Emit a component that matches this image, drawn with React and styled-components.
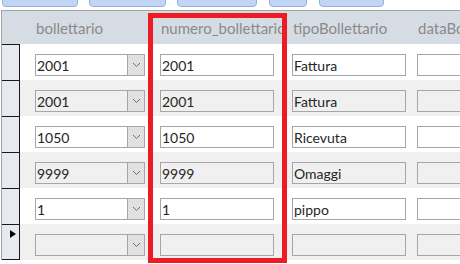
import styled, { createGlobalStyle } from "styled-components";

const GlobalStyle = createGlobalStyle`
  body {
    margin: 0;
    background: #ffffff;
    font-family: Lato, "Liberation Sans", sans-serif;
  }
`;

const TABS = [
  { w: 76, gap: 2 },
  { w: 77, gap: 11 },
  { w: 80, gap: 11 },
  { w: 38, gap: 12 },
  { w: 65, gap: 12 },
];

const COLUMNS = [
  { key: "bollettario", label: "bollettario", w: 125, iw: 110, combo: true },
  { key: "numero", label: "numero_bollettario", w: 132, iw: 114 },
  { key: "tipo", label: "tipoBollettario", w: 125, iw: 114 },
  { key: "data", label: "dataBollettario", w: 120, iw: 114 },
];

const ROWS = [
  { bollettario: "2001", numero: "2001", tipo: "Fattura", data: "" },
  { bollettario: "2001", numero: "2001", tipo: "Fattura", data: "" },
  { bollettario: "1050", numero: "1050", tipo: "Ricevuta", data: "" },
  { bollettario: "9999", numero: "9999", tipo: "Omaggi", data: "" },
  { bollettario: "1", numero: "1", tipo: "pippo", data: "" },
  { bollettario: "", numero: "", tipo: "", data: "", isNew: true },
];

function App() {
  return (
    <Page>
      <GlobalStyle />
      <TabStrip>
        {TABS.map((t, i) => (
          <Tab key={i} $w={t.w} $gap={t.gap} />
        ))}
      </TabStrip>
      <Datasheet>
        <HeaderRow>
          <HeaderSelector />
          <Cells>
            {COLUMNS.map((c) => (
              <HeaderCell key={c.key} $w={c.w}>
                {c.label}
              </HeaderCell>
            ))}
          </Cells>
        </HeaderRow>
        {ROWS.map((r, i) => (
          <Row key={i} $alt={i % 2 === 1}>
            <RowSelector>{r.isNew && <Pointer />}</RowSelector>
            <Cells>
              {COLUMNS.map((c) => (
                <Cell key={c.key} $w={c.w}>
                  <Field $w={c.iw}>
                    <FieldText>{r[c.key]}</FieldText>
                    {c.combo && (
                      <DropButton>
                        <svg width="9" height="6" viewBox="0 0 9 6">
                          <polyline
                            points="1,1 4.5,4.5 8,1"
                            fill="none"
                            stroke="#6d6d6d"
                            strokeWidth="1"
                          />
                        </svg>
                      </DropButton>
                    )}
                  </Field>
                </Cell>
              ))}
            </Cells>
          </Row>
        ))}
      </Datasheet>
      <Highlight />
    </Page>
  );
}

const Page = styled.div`
  position: relative;
  width: 460px;
  height: 264px;
  overflow: hidden;
  background: #ffffff;
`;

const TabStrip = styled.div`
  display: flex;
  height: 7px;
  align-items: flex-end;
`;

const Tab = styled.div`
  flex: none;
  width: ${(p) => p.$w}px;
  margin-left: ${(p) => p.$gap}px;
  height: 10px;
  box-sizing: border-box;
  background: #c3d5f4;
  border: 1px solid #93b1e0;
  border-radius: 0 0 4px 4px;
`;

const Datasheet = styled.div`
  margin-top: 3px;
  margin-left: 1px;
  border-top: 1px solid #a3a3a3;
  border-left: 1px solid #a3a3a3;
`;

const HeaderRow = styled.div`
  display: flex;
  height: 33px;
  background: #d6dce4;
`;

const HeaderSelector = styled.div`
  flex: none;
  width: 18px;
`;

const Cells = styled.div`
  display: flex;
  padding-left: 15px;
  flex: none;
`;

const HeaderCell = styled.div`
  flex: none;
  width: ${(p) => p.$w}px;
  display: flex;
  align-items: center;
  padding-left: 1px;
  box-sizing: border-box;
  color: #8a8a8a;
  font-size: 15px;
  white-space: nowrap;
  overflow: hidden;
`;

const Row = styled.div`
  display: flex;
  height: 36px;
  background: ${(p) => (p.$alt ? "#f0f0f0" : "#ffffff")};
`;

const RowSelector = styled.div`
  flex: none;
  width: 18px;
  box-sizing: border-box;
  background: #e7ebf1;
  border-right: 1px solid #1a1a1a;
  border-top: 1px solid #1a1a1a;
  padding-left: 8px;
  padding-top: 5px;
  ${Row}:last-child & {
    border-bottom: 1px solid #1a1a1a;
  }
`;

const Pointer = styled.div`
  width: 0;
  height: 0;
  border-top: 4px solid transparent;
  border-bottom: 4px solid transparent;
  border-left: 6px solid #000000;
`;

const Cell = styled.div`
  flex: none;
  width: ${(p) => p.$w}px;
  padding-top: 10px;
  box-sizing: border-box;
`;

const Field = styled.div`
  display: flex;
  width: ${(p) => p.$w}px;
  height: 22px;
  box-sizing: border-box;
  border: 1px solid #a6a6a6;
`;

const FieldText = styled.div`
  flex: 1;
  display: flex;
  align-items: center;
  padding-left: 1px;
  color: #262626;
  font-size: 14px;
  white-space: nowrap;
  overflow: hidden;
`;

const DropButton = styled.div`
  flex: none;
  width: 16px;
  display: flex;
  align-items: center;
  justify-content: center;
  background: #e1e1e1;
  border-left: 1px solid #a6a6a6;
`;

const Highlight = styled.div`
  position: absolute;
  left: 148px;
  top: 13px;
  width: 139px;
  height: 250px;
  box-sizing: border-box;
  border: 5px solid #ed1c24;
  pointer-events: none;
`;

export default App;
